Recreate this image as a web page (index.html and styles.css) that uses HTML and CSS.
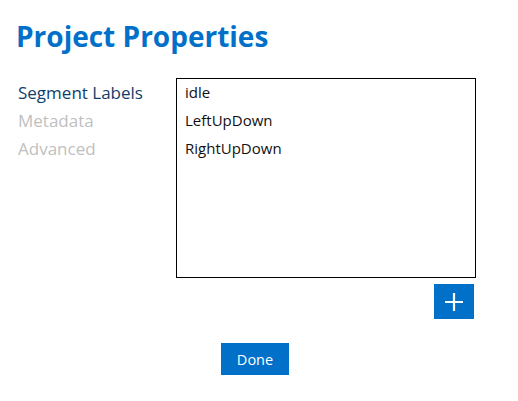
FILE: index.html
```html
<!DOCTYPE html>
<html lang="en">
<head>
  <meta charset="UTF-8">
  <title>Project Properties</title>
  <link rel="stylesheet" href="styles.css">
</head>
<body>
<div class="page">
  <h1>Project Properties</h1>

  <div class="content">
    <ul class="nav">
      <li class="active">Segment Labels</li>
      <li>Metadata</li>
      <li>Advanced</li>
    </ul>

    <div class="panel">
      <ul class="labels">
        <li>idle</li>
        <li>LeftUpDown</li>
        <li>RightUpDown</li>
      </ul>
      <div class="panel-actions">
        <button class="add-btn" aria-label="Add">
          <svg width="20" height="20" viewBox="0 0 20 20">
            <path d="M10 1v18M1 10h18" stroke="#fff" stroke-width="2.2" fill="none"/>
          </svg>
        </button>
      </div>
    </div>
  </div>

  <div class="footer">
    <button class="done-btn">Done</button>
  </div>
</div>
</body>
</html>
```

FILE: styles.css
```css
/* General */
body {
  margin: 0;
  padding: 0;
  font-family: "Open Sans", "Noto Sans", Arial, sans-serif;
  background: #fff;
}
.page {
  width: 518px;
  padding: 17px 0 0 0;
}
h1 {
  margin: 0 0 0 16px;
  font-size: 28px;
  font-weight: bold;
  color: #0070c9;
  line-height: 38px;
}
.content {
  display: flex;
  margin-top: 23px;
}
.nav {
  list-style: none;
  margin: 0;
  padding: 1px 0 0 18px;
  width: 176px;
  box-sizing: border-box;
}
.nav li {
  font-size: 17px;
  line-height: 28px;
  color: #c0c0c0;
}
.nav li.active {
  color: #103e6c;
}
.panel {
  display: flex;
  flex-direction: column;
}
.labels {
  list-style: none;
  margin: 0;
  padding: 0 8px;
  width: 300px;
  height: 200px;
  box-sizing: border-box;
  border: 1px solid #000;
}
.labels li {
  font-size: 15px;
  line-height: 28px;
  color: #111;
}
.labels li:first-child {
  margin-top: -1px;
}
.panel-actions {
  display: flex;
  justify-content: flex-end;
  padding: 6px 2px 0 0;
}
.add-btn {
  width: 40px;
  height: 35px;
  border: none;
  background: #0070c9;
  display: flex;
  align-items: center;
  justify-content: center;
  padding: 0;
  cursor: pointer;
}
.footer {
  padding: 24px 0 0 221px;
}
.done-btn {
  width: 68px;
  height: 32px;
  border: none;
  background: #0070c9;
  color: #fff;
  font-family: "Open Sans", "Noto Sans", Arial, sans-serif;
  font-size: 14.5px;
  padding: 0;
  cursor: pointer;
}
```
